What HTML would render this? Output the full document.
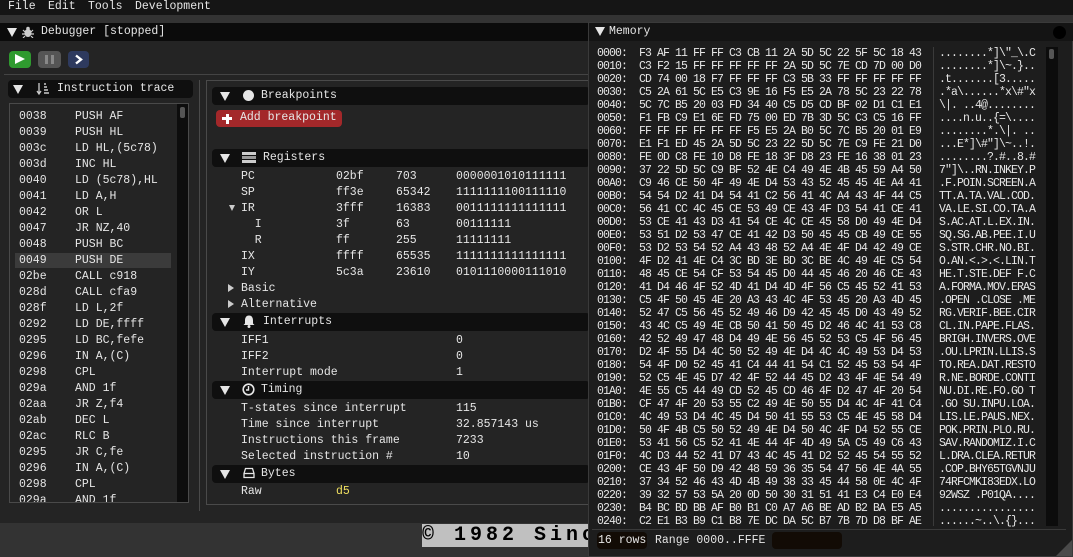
<!DOCTYPE html>
<html><head><meta charset="utf-8">
<style>
*{margin:0;padding:0;box-sizing:border-box}
body{width:1073px;height:557px;overflow:hidden;background:#333;font-family:"Liberation Mono","DejaVu Sans Mono",monospace;font-size:11.5px;color:#e6e6e6;position:relative}
.a{position:absolute}
.t{position:absolute;white-space:pre;line-height:14px}
.hdr{position:absolute;background:#0f0f0f;border-radius:4px;height:18px}
.tri{position:absolute;width:0;height:0;border-left:5px solid transparent;border-right:5px solid transparent;border-top:9px solid #e6e6e6}
.stri{position:absolute;width:0;height:0;border-top:4px solid transparent;border-bottom:4px solid transparent;border-left:6px solid #ccc}
.mr{position:absolute;left:597px;white-space:pre;line-height:13px;height:13px;font-size:11.5px;letter-spacing:-0.9px}
.mr .h{position:absolute;left:42px}
.mr .c{position:absolute;left:342px}
</style></head><body>
<!-- menubar -->
<div class="a" style="left:0;top:0;width:1073px;height:15px;background:#151515"></div>
<div class="t" style="left:8px;top:0;">File</div>
<div class="t" style="left:48px;top:0;">Edit</div>
<div class="t" style="left:88px;top:0;">Tools</div>
<div class="t" style="left:135px;top:0;">Development</div>

<!-- debugger window -->
<div class="a" style="left:0;top:23px;width:590px;height:500px;background:#242424"></div>
<div class="a" style="left:0;top:23px;width:590px;height:18px;background:#0b0b0b"></div>
<div class="tri" style="left:7px;top:28px"></div>
<svg class="a" style="left:22px;top:26px" width="12" height="12" viewBox="0 0 12 12"><ellipse cx="6" cy="7" rx="3.5" ry="4" fill="#ccc"/><circle cx="6" cy="2.5" r="1.8" fill="#ccc"/><path d="M1 4l2 2M11 4l-2 2M0 8h3M12 8H9M1 12l2-2M11 12l-2-2" stroke="#ccc" stroke-width="1.2"/></svg>
<div class="t" style="left:41px;top:25px">Debugger [stopped]</div>

<div class="a" style="left:9px;top:51px;width:22px;height:17px;background:#2f9a2f;border-radius:4px"></div>
<div class="a" style="left:15px;top:54px;width:0;height:0;border-top:5.5px solid transparent;border-bottom:5.5px solid transparent;border-left:10px solid #fff"></div>
<div class="a" style="left:38px;top:51px;width:23px;height:17px;background:#555;border-radius:4px"></div>
<div class="a" style="left:45px;top:55px;width:3px;height:9px;background:#888"></div>
<div class="a" style="left:51px;top:55px;width:3px;height:9px;background:#888"></div>
<div class="a" style="left:68px;top:51px;width:21px;height:17px;background:#2e3a5e;border-radius:4px"></div>
<svg class="a" style="left:74px;top:54px" width="10" height="11"><path d="M2 1.5L7 5.5L2 9.5" stroke="#fff" stroke-width="2.4" fill="none"/></svg>
<div class="a" style="left:4px;top:74px;width:586px;height:1px;background:#444"></div>

<!-- instruction trace -->
<div class="hdr" style="left:8px;top:80px;width:185px"></div>
<div class="tri" style="left:13px;top:85px"></div>
<svg class="a" style="left:36px;top:82px" width="14" height="14"><path d="M3 1v11M1 9l2 3 2-3" stroke="#ccc" stroke-width="1.3" fill="none"/><path d="M8 2h2M8 5h3M8 8h4M8 11h5" stroke="#ccc" stroke-width="1.4"/></svg>
<div class="t" style="left:57px;top:82px">Instruction trace</div>
<div class="a" style="left:9px;top:103px;width:180px;height:400px;border:1px solid #4a4a4a;background:#242424"></div>
<div class="a" style="left:177px;top:104px;width:11px;height:398px;background:#0d0d0d"></div>
<div class="a" style="left:180px;top:107px;width:5px;height:11px;background:#555;border-radius:2px"></div>
<div class="a" style="left:15px;top:253px;width:156px;height:15px;background:#3b3b3b"></div>
<div class="a" style="left:10px;top:104px;width:166px;height:398px;overflow:hidden">
<div class="t" style="left:9px;top:5px;line-height:16px">0038
0039
003c
003d
0040
0041
0042
0047
0048
0049
02be
028d
028f
0292
0295
0296
0298
029a
02aa
02ab
02ac
0295
0296
0298
029a</div>
<div class="t" style="left:65px;top:5px;line-height:16px">PUSH AF
PUSH HL
LD HL,(5c78)
INC HL
LD (5c78),HL
LD A,H
OR L
JR NZ,40
PUSH BC
PUSH DE
CALL c918
CALL cfa9
LD L,2f
LD DE,ffff
LD BC,fefe
IN A,(C)
CPL
AND 1f
JR Z,f4
DEC L
RLC B
JR C,fe
IN A,(C)
CPL
AND 1f</div>
</div>
<div class="a" style="left:199px;top:80px;width:1px;height:431px;background:#4a4a4a"></div>

<!-- right child -->
<div class="a" style="left:206px;top:80px;width:384px;height:425px;border:1px solid #4a4a4a;border-right:none"></div>

<div class="hdr" style="left:212px;top:87px;width:378px"></div>
<div class="tri" style="left:220px;top:92px"></div>
<div class="a" style="left:243px;top:90px;width:11px;height:11px;border-radius:50%;background:#e6e6e6"></div>
<div class="t" style="left:261px;top:89px">Breakpoints</div>
<div class="a" style="left:216px;top:110px;width:126px;height:17px;background:#a3282a;border-radius:4px"></div>
<div class="a" style="left:222px;top:117px;width:10px;height:3px;background:#fff"></div>
<div class="a" style="left:225.5px;top:113.5px;width:3px;height:10px;background:#fff"></div>
<div class="t" style="left:240px;top:111px">Add breakpoint</div>

<div class="hdr" style="left:212px;top:149px;width:378px"></div>
<div class="tri" style="left:220px;top:154px"></div>
<svg class="a" style="left:242px;top:151px" width="14" height="13"><rect x="0" y="1" width="14" height="3" fill="#ccc"/><rect x="0" y="5" width="14" height="3" fill="#999"/><rect x="0" y="9" width="14" height="3" fill="#ccc"/></svg>
<div class="t" style="left:263px;top:151px">Registers</div>
<div class="t" style="left:241px;top:169px;line-height:16px">PC
SP
IR
  I
  R
IX
IY
Basic
Alternative</div>
<div class="stri" style="left:229px;top:205px;border-left:none;border-top:6px solid #ccc;border-left:3.5px solid transparent;border-right:3.5px solid transparent;border-bottom:none"></div>
<div class="stri" style="left:228px;top:284px"></div>
<div class="stri" style="left:228px;top:300px"></div>
<div class="t" style="left:336px;top:169px;line-height:16px">02bf
ff3e
3fff
3f
ff
ffff
5c3a</div>
<div class="t" style="left:396px;top:169px;line-height:16px">703
65342
16383
63
255
65535
23610</div>
<div class="t" style="left:456px;top:169px;line-height:16px">0000001010111111
1111111100111110
0011111111111111
00111111
11111111
1111111111111111
0101110000111010</div>

<div class="hdr" style="left:212px;top:313px;width:378px"></div>
<div class="tri" style="left:220px;top:318px"></div>
<svg class="a" style="left:242px;top:314px" width="14" height="14"><path d="M7 1.5c-3 0-4 2.5-4 5v3l-1.5 1.5h11L11 9.5v-3c0-2.5-1-5-4-5z" fill="#e6e6e6"/><circle cx="7" cy="12.5" r="1.5" fill="#e6e6e6"/></svg>
<div class="t" style="left:263px;top:315px">Interrupts</div>
<div class="t" style="left:241px;top:333px;line-height:16px">IFF1
IFF2
Interrupt mode</div>
<div class="t" style="left:456px;top:333px;line-height:16px">0
0
1</div>

<div class="hdr" style="left:212px;top:381px;width:378px"></div>
<div class="tri" style="left:220px;top:386px"></div>
<svg class="a" style="left:242px;top:383px" width="13" height="13"><circle cx="6.5" cy="6.5" r="5.3" stroke="#e6e6e6" stroke-width="1.6" fill="none"/><path d="M6.5 3v4H4" stroke="#e6e6e6" stroke-width="1.4" fill="none"/></svg>
<div class="t" style="left:261px;top:383px">Timing</div>
<div class="t" style="left:241px;top:401px;line-height:16px">T-states since interrupt
Time since interrupt
Instructions this frame
Selected instruction #</div>
<div class="t" style="left:456px;top:401px;line-height:16px">115
32.857143 us
7233
10</div>

<div class="hdr" style="left:212px;top:465px;width:378px"></div>
<div class="tri" style="left:220px;top:470px"></div>
<svg class="a" style="left:243px;top:467px" width="12" height="12"><path d="M2.5 1.5h7l1.5 5v4H1v-4z" stroke="#e6e6e6" stroke-width="1.3" fill="none"/><path d="M1 6.5h10" stroke="#e6e6e6" stroke-width="1.3"/></svg>
<div class="t" style="left:261px;top:467px">Bytes</div>
<div class="t" style="left:241px;top:485px">Raw</div>
<div class="t" style="left:336px;top:485px;color:#f0e060">d5</div>

<!-- spectrum screen strip -->
<div class="a" style="left:422px;top:524px;width:170px;height:23px;background:#c0c0c0;overflow:hidden">
<div class="t" style="left:0;top:1px;font-size:20px;line-height:22px;letter-spacing:4px;color:#000;font-weight:bold">© 1982 Sinc</div></div>

<!-- memory window -->
<div class="a" style="left:588px;top:22px;width:485px;height:535px;background:#1d1d1d;border:1px solid #3a3a3a"></div>
<div class="a" style="left:589px;top:23px;width:484px;height:18px;background:#141414"></div>
<div class="tri" style="left:595px;top:27px"></div>
<div class="t" style="left:609px;top:25px">Memory</div>
<div class="a" style="left:1053px;top:26px;width:13px;height:13px;border-radius:50%;background:#000"></div>
<div class="a" style="left:933px;top:47px;width:1px;height:479px;background:#3a3a3a"></div>
<div class="a" style="left:1046px;top:47px;width:12px;height:479px;background:#0c0c0c"></div>
<div class="a" style="left:1049px;top:49px;width:5px;height:10px;background:#555;border-radius:2px"></div>
<div class="a" style="left:589px;top:45px;width:460px;height:482px;overflow:hidden">
<div style="position:absolute;left:-589px;top:-45px">
<div class="mr" style="top:47px">0000:<span class="h">F3 AF 11 FF FF C3 CB 11 2A 5D 5C 22 5F 5C 18 43</span><span class="c">........*]\"_\.C</span></div>
<div class="mr" style="top:60px">0010:<span class="h">C3 F2 15 FF FF FF FF FF 2A 5D 5C 7E CD 7D 00 D0</span><span class="c">........*]\~.}..</span></div>
<div class="mr" style="top:73px">0020:<span class="h">CD 74 00 18 F7 FF FF FF C3 5B 33 FF FF FF FF FF</span><span class="c">.t.......[3.....</span></div>
<div class="mr" style="top:86px">0030:<span class="h">C5 2A 61 5C E5 C3 9E 16 F5 E5 2A 78 5C 23 22 78</span><span class="c">.*a\......*x\#"x</span></div>
<div class="mr" style="top:99px">0040:<span class="h">5C 7C B5 20 03 FD 34 40 C5 D5 CD BF 02 D1 C1 E1</span><span class="c">\|. ..4@........</span></div>
<div class="mr" style="top:112px">0050:<span class="h">F1 FB C9 E1 6E FD 75 00 ED 7B 3D 5C C3 C5 16 FF</span><span class="c">....n.u..{=\....</span></div>
<div class="mr" style="top:125px">0060:<span class="h">FF FF FF FF FF FF F5 E5 2A B0 5C 7C B5 20 01 E9</span><span class="c">........*.\|. ..</span></div>
<div class="mr" style="top:138px">0070:<span class="h">E1 F1 ED 45 2A 5D 5C 23 22 5D 5C 7E C9 FE 21 D0</span><span class="c">...E*]\#"]\~..!.</span></div>
<div class="mr" style="top:151px">0080:<span class="h">FE 0D C8 FE 10 D8 FE 18 3F D8 23 FE 16 38 01 23</span><span class="c">........?.#..8.#</span></div>
<div class="mr" style="top:164px">0090:<span class="h">37 22 5D 5C C9 BF 52 4E C4 49 4E 4B 45 59 A4 50</span><span class="c">7"]\..RN.INKEY.P</span></div>
<div class="mr" style="top:177px">00A0:<span class="h">C9 46 CE 50 4F 49 4E D4 53 43 52 45 45 4E A4 41</span><span class="c">.F.POIN.SCREEN.A</span></div>
<div class="mr" style="top:190px">00B0:<span class="h">54 54 D2 41 D4 54 41 C2 56 41 4C A4 43 4F 44 C5</span><span class="c">TT.A.TA.VAL.COD.</span></div>
<div class="mr" style="top:203px">00C0:<span class="h">56 41 CC 4C 45 CE 53 49 CE 43 4F D3 54 41 CE 41</span><span class="c">VA.LE.SI.CO.TA.A</span></div>
<div class="mr" style="top:216px">00D0:<span class="h">53 CE 41 43 D3 41 54 CE 4C CE 45 58 D0 49 4E D4</span><span class="c">S.AC.AT.L.EX.IN.</span></div>
<div class="mr" style="top:229px">00E0:<span class="h">53 51 D2 53 47 CE 41 42 D3 50 45 45 CB 49 CE 55</span><span class="c">SQ.SG.AB.PEE.I.U</span></div>
<div class="mr" style="top:242px">00F0:<span class="h">53 D2 53 54 52 A4 43 48 52 A4 4E 4F D4 42 49 CE</span><span class="c">S.STR.CHR.NO.BI.</span></div>
<div class="mr" style="top:255px">0100:<span class="h">4F D2 41 4E C4 3C BD 3E BD 3C BE 4C 49 4E C5 54</span><span class="c">O.AN.&lt;.&gt;.&lt;.LIN.T</span></div>
<div class="mr" style="top:268px">0110:<span class="h">48 45 CE 54 CF 53 54 45 D0 44 45 46 20 46 CE 43</span><span class="c">HE.T.STE.DEF F.C</span></div>
<div class="mr" style="top:281px">0120:<span class="h">41 D4 46 4F 52 4D 41 D4 4D 4F 56 C5 45 52 41 53</span><span class="c">A.FORMA.MOV.ERAS</span></div>
<div class="mr" style="top:294px">0130:<span class="h">C5 4F 50 45 4E 20 A3 43 4C 4F 53 45 20 A3 4D 45</span><span class="c">.OPEN .CLOSE .ME</span></div>
<div class="mr" style="top:307px">0140:<span class="h">52 47 C5 56 45 52 49 46 D9 42 45 45 D0 43 49 52</span><span class="c">RG.VERIF.BEE.CIR</span></div>
<div class="mr" style="top:320px">0150:<span class="h">43 4C C5 49 4E CB 50 41 50 45 D2 46 4C 41 53 C8</span><span class="c">CL.IN.PAPE.FLAS.</span></div>
<div class="mr" style="top:333px">0160:<span class="h">42 52 49 47 48 D4 49 4E 56 45 52 53 C5 4F 56 45</span><span class="c">BRIGH.INVERS.OVE</span></div>
<div class="mr" style="top:346px">0170:<span class="h">D2 4F 55 D4 4C 50 52 49 4E D4 4C 4C 49 53 D4 53</span><span class="c">.OU.LPRIN.LLIS.S</span></div>
<div class="mr" style="top:359px">0180:<span class="h">54 4F D0 52 45 41 C4 44 41 54 C1 52 45 53 54 4F</span><span class="c">TO.REA.DAT.RESTO</span></div>
<div class="mr" style="top:372px">0190:<span class="h">52 C5 4E 45 D7 42 4F 52 44 45 D2 43 4F 4E 54 49</span><span class="c">R.NE.BORDE.CONTI</span></div>
<div class="mr" style="top:385px">01A0:<span class="h">4E 55 C5 44 49 CD 52 45 CD 46 4F D2 47 4F 20 54</span><span class="c">NU.DI.RE.FO.GO T</span></div>
<div class="mr" style="top:398px">01B0:<span class="h">CF 47 4F 20 53 55 C2 49 4E 50 55 D4 4C 4F 41 C4</span><span class="c">.GO SU.INPU.LOA.</span></div>
<div class="mr" style="top:411px">01C0:<span class="h">4C 49 53 D4 4C 45 D4 50 41 55 53 C5 4E 45 58 D4</span><span class="c">LIS.LE.PAUS.NEX.</span></div>
<div class="mr" style="top:424px">01D0:<span class="h">50 4F 4B C5 50 52 49 4E D4 50 4C 4F D4 52 55 CE</span><span class="c">POK.PRIN.PLO.RU.</span></div>
<div class="mr" style="top:437px">01E0:<span class="h">53 41 56 C5 52 41 4E 44 4F 4D 49 5A C5 49 C6 43</span><span class="c">SAV.RANDOMIZ.I.C</span></div>
<div class="mr" style="top:450px">01F0:<span class="h">4C D3 44 52 41 D7 43 4C 45 41 D2 52 45 54 55 52</span><span class="c">L.DRA.CLEA.RETUR</span></div>
<div class="mr" style="top:463px">0200:<span class="h">CE 43 4F 50 D9 42 48 59 36 35 54 47 56 4E 4A 55</span><span class="c">.COP.BHY65TGVNJU</span></div>
<div class="mr" style="top:476px">0210:<span class="h">37 34 52 46 43 4D 4B 49 38 33 45 44 58 0E 4C 4F</span><span class="c">74RFCMKI83EDX.LO</span></div>
<div class="mr" style="top:489px">0220:<span class="h">39 32 57 53 5A 20 0D 50 30 31 51 41 E3 C4 E0 E4</span><span class="c">92WSZ .P01QA....</span></div>
<div class="mr" style="top:502px">0230:<span class="h">B4 BC BD BB AF B0 B1 C0 A7 A6 BE AD B2 BA E5 A5</span><span class="c">................</span></div>
<div class="mr" style="top:515px">0240:<span class="h">C2 E1 B3 B9 C1 B8 7E DC DA 5C B7 7B 7D D8 BF AE</span><span class="c">......~..\.{}...</span></div>
</div></div>
<div class="a" style="left:592px;top:529px;width:474px;height:1px;background:#3a3a3a"></div>
<div class="a" style="left:597px;top:532px;width:50px;height:17px;background:#120b05;border-radius:4px"></div>
<div class="t" style="left:598px;top:534px">16 rows</div>
<div class="t" style="left:655px;top:534px">Range 0000..FFFE</div>
<div class="a" style="left:772px;top:532px;width:70px;height:17px;background:#120b05;border-radius:4px"></div>
<div class="a" style="left:1056px;top:540px;width:0;height:0;border-left:16px solid transparent;border-bottom:16px solid #4a4a4a"></div>
</body></html>
